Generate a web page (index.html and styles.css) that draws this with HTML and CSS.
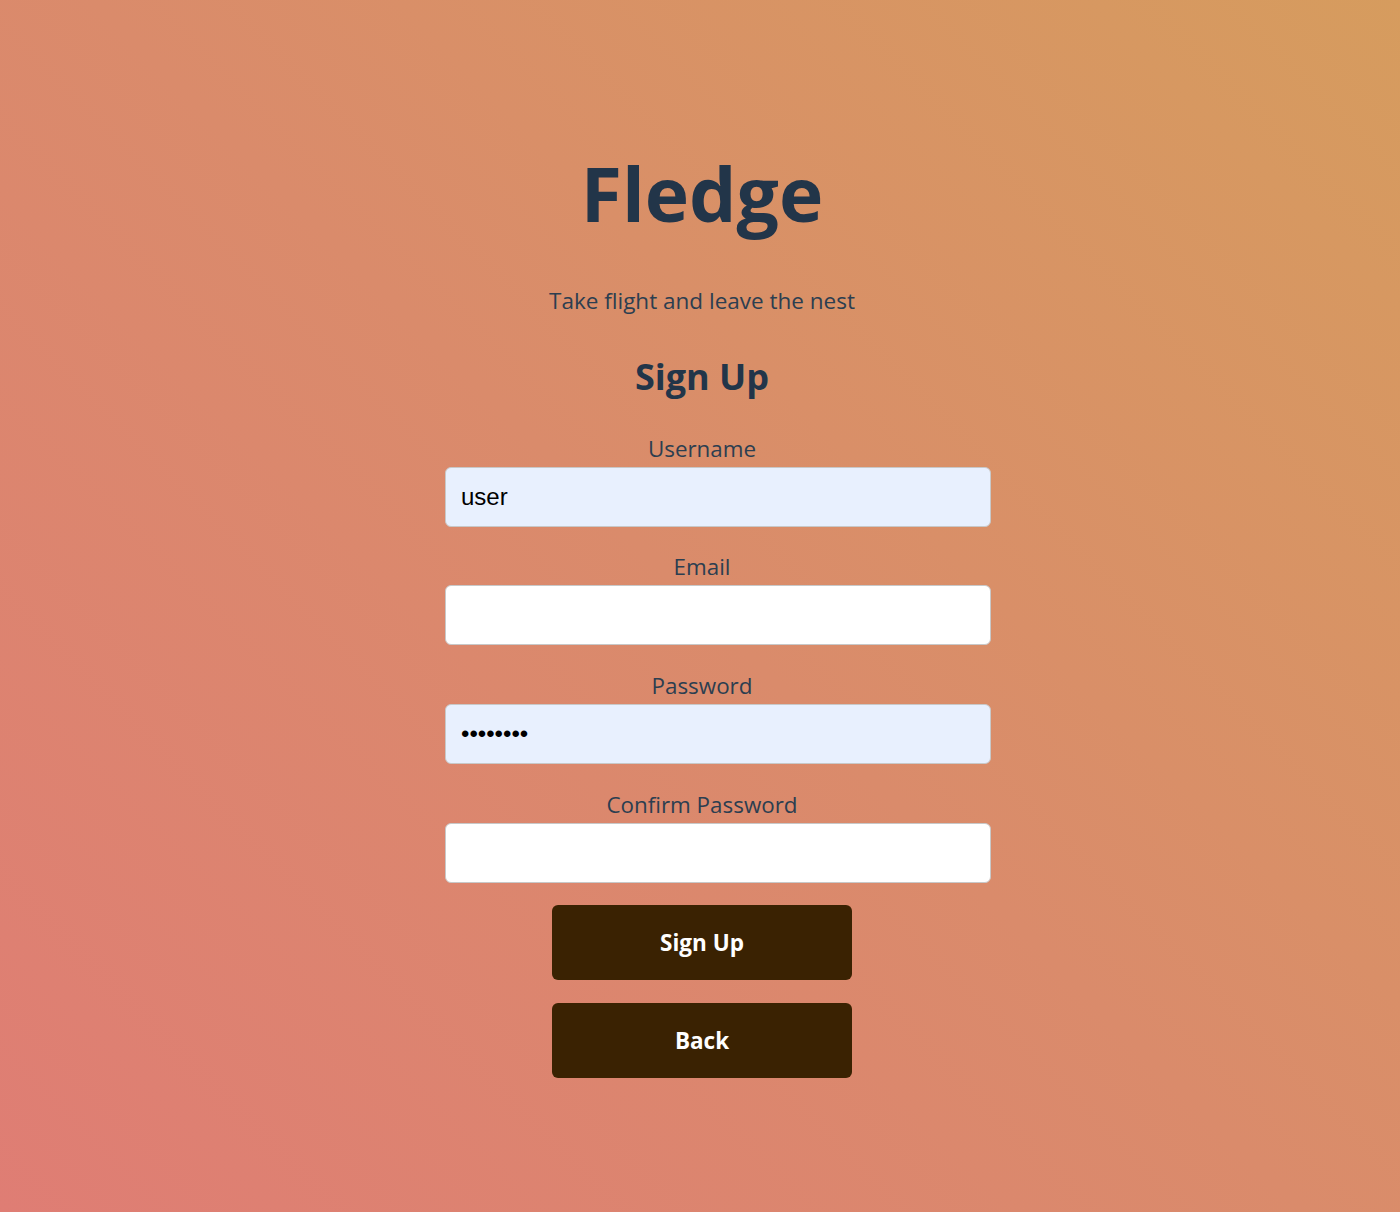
FILE: index.html
```html
<!DOCTYPE html>
<html lang="en">
<head>
<meta charset="utf-8">
<title>Fledge - Sign Up</title>
<link rel="stylesheet" href="styles.css">
</head>
<body>
<main class="page">
  <section class="auth">
    <h1 class="brand">Fledge</h1>
    <p class="tagline">Take flight and leave the nest</p>
    <h2 class="form-title">Sign Up</h2>
    <form class="form">
      <div class="field">
        <label class="label" for="username">Username</label>
        <input class="input input-filled" id="username" type="text" value="user">
      </div>
      <div class="field">
        <label class="label" for="email">Email</label>
        <input class="input" id="email" type="email">
      </div>
      <div class="field">
        <label class="label" for="password">Password</label>
        <input class="input input-filled" id="password" type="password" value="password">
      </div>
      <div class="field">
        <label class="label" for="confirm">Confirm Password</label>
        <input class="input" id="confirm" type="password">
      </div>
      <div class="actions">
        <button class="btn" type="button">Sign Up</button>
        <button class="btn" type="button">Back</button>
      </div>
    </form>
  </section>
</main>
</body>
</html>
```

FILE: styles.css
```css
* { box-sizing: border-box; }

html, body {
  margin: 0;
  height: 100%;
}

body {
  font-family: "Open Sans", "Noto Sans", sans-serif;
  color: #2c3e50;
  background: linear-gradient(45deg, #df7d74 0%, #da8b6b 50%, #d69c5e 100%);
  min-height: 1212px;
}

.page {
  display: flex;
  justify-content: center;
  padding-left: 4px;
}

.auth {
  width: 514px;
  display: flex;
  flex-direction: column;
  align-items: center;
  padding-top: 143px;
}

.brand {
  margin: 0;
  font-size: 75px;
  line-height: 100px;
  font-weight: 700;
  color: #223549;
}

.tagline {
  margin: 44px 0 0;
  font-size: 22.5px;
  line-height: 28px;
}

.form-title {
  margin: 40px 0 0;
  font-size: 36px;
  line-height: 44px;
  font-weight: 700;
  color: #223549;
}

.form {
  width: 100%;
  display: flex;
  flex-direction: column;
  margin-top: 35.7px;
}

.field {
  display: flex;
  flex-direction: column;
  align-items: stretch;
}

.field + .field { margin-top: 26.67px; }

.label {
  text-align: center;
  font-size: 22.4px;
  line-height: 28px;
  margin-bottom: 4px;
}

.input {
  box-sizing: content-box;
  width: 100%;
  height: 58px;
  padding: 0 15px;
  border: 1px solid #c8c8c8;
  border-radius: 6px;
  background: #ffffff;
  font-family: "Liberation Sans", Arial, sans-serif;
  font-size: 24px;
  color: #000;
  outline: none;
}

.input-filled { background: #e8f0fe; }

.actions {
  display: flex;
  flex-direction: column;
  align-items: center;
  gap: 23px;
  margin-top: 22px;
}

.btn {
  width: 300px;
  height: 75px;
  border: none;
  border-radius: 6px;
  background: #3a2202;
  color: #ffffff;
  font-family: "Open Sans", "Noto Sans", sans-serif;
  font-size: 22.5px;
  font-weight: 700;
  cursor: pointer;
}
```
